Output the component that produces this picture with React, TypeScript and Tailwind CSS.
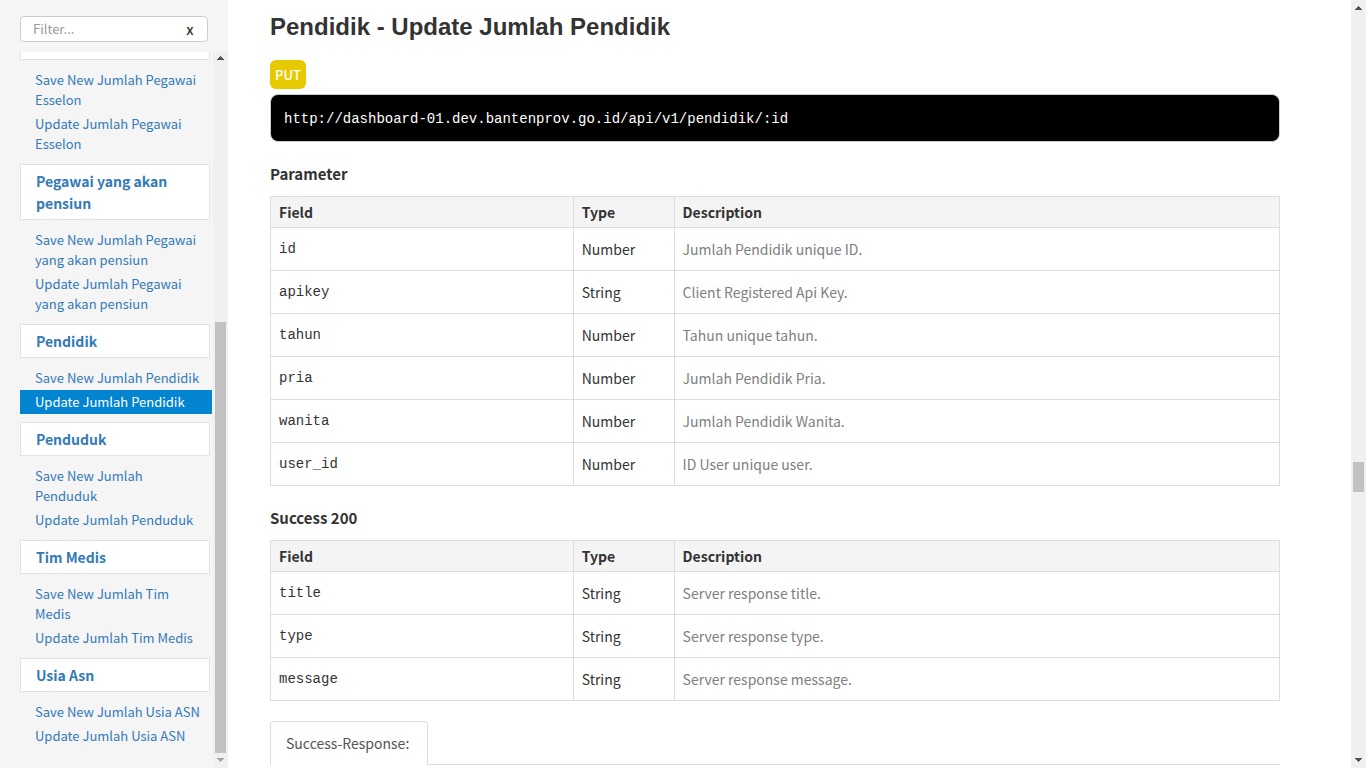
import React from "react";

type NavGroup = { title?: string; items: string[] };
type Field = { name: string; type: string; description: string };

const navGroups: NavGroup[] = [
  { items: ["Save New Jumlah Pegawai Esselon", "Update Jumlah Pegawai Esselon"] },
  {
    title: "Pegawai yang akan pensiun",
    items: ["Save New Jumlah Pegawai yang akan pensiun", "Update Jumlah Pegawai yang akan pensiun"],
  },
  { title: "Pendidik", items: ["Save New Jumlah Pendidik", "Update Jumlah Pendidik"] },
  { title: "Penduduk", items: ["Save New Jumlah Penduduk", "Update Jumlah Penduduk"] },
  { title: "Tim Medis", items: ["Save New Jumlah Tim Medis", "Update Jumlah Tim Medis"] },
  { title: "Usia Asn", items: ["Save New Jumlah Usia ASN", "Update Jumlah Usia ASN"] },
];

const activeItem = "Update Jumlah Pendidik";

const parameters: Field[] = [
  { name: "id", type: "Number", description: "Jumlah Pendidik unique ID." },
  { name: "apikey", type: "String", description: "Client Registered Api Key." },
  { name: "tahun", type: "Number", description: "Tahun unique tahun." },
  { name: "pria", type: "Number", description: "Jumlah Pendidik Pria." },
  { name: "wanita", type: "Number", description: "Jumlah Pendidik Wanita." },
  { name: "user_id", type: "Number", description: "ID User unique user." },
];

const responses: Field[] = [
  { name: "title", type: "String", description: "Server response title." },
  { name: "type", type: "String", description: "Server response type." },
  { name: "message", type: "String", description: "Server response message." },
];

function Arrow({ down = false, muted = false, trim = 0 }: { down?: boolean; muted?: boolean; trim?: number }) {
  return (
    <svg
      width="15"
      height={15 - trim}
      viewBox={`0 ${trim} 15 ${15 - trim}`}
      shapeRendering="crispEdges"
      className={muted ? "shrink-0 fill-[#a3a3a3]" : "shrink-0 fill-[#505050]"}
    >
      {down ? (
        <path d="M4 5h7v1h-1v1h-1v1h-1v1h-1v-1h-1v-1h-1v-1h-1z" />
      ) : (
        <path d="M7 6h1v1h1v1h1v1h1v1h-7v-1h1v-1h1v-1h1z" />
      )}
    </svg>
  );
}

function FieldTable({ title, rows }: { title: string; rows: Field[] }) {
  return (
    <section>
      <h2 className="mb-[11px] text-[15px] leading-[23px] font-bold">{title}</h2>
      <table className="w-full table-fixed border-collapse text-left text-[14px]">
        <thead className="bg-[#f4f4f4]">
          <tr>
            <th className="w-[30%] border border-[#dddddd] px-2 py-1 leading-[22px] font-bold">Field</th>
            <th className="w-[10%] border border-[#dddddd] px-2 py-1 leading-[22px] font-bold">Type</th>
            <th className="w-[60%] border border-[#dddddd] px-2 py-1 leading-[22px] font-bold">Description</th>
          </tr>
        </thead>
        <tbody>
          {rows.map((row) => (
            <tr key={row.name}>
              <td className="border border-[#dddddd] px-2 py-[9px] align-top font-['Liberation_Mono',monospace] leading-6">
                {row.name}
              </td>
              <td className="border border-[#dddddd] px-2 py-2 leading-[26px]">{row.type}</td>
              <td className="border border-[#dddddd] px-2 py-2 leading-[26px] text-[#808080]">{row.description}</td>
            </tr>
          ))}
        </tbody>
      </table>
    </section>
  );
}

export default function App() {
  return (
    <div className="flex h-screen overflow-hidden bg-white font-['Noto_Sans_CJK_SC',sans-serif] text-[#333333]">
      <aside className="flex w-[228px] shrink-0 flex-col bg-[#f5f5f5]">
        <div className="mt-4 mr-5 mb-2.5 ml-5 flex h-[26px] shrink-0 items-center rounded border border-[#cccccc] bg-white text-[13px]">
          <input
            type="text"
            aria-label="Filter"
            placeholder="Filter..."
            className="min-w-0 flex-1 bg-transparent pl-3 outline-none placeholder:text-[#999999]"
          />
          <button type="button" aria-label="Clear filter" className="mr-[7px] w-5 text-[14px] leading-5 font-medium">
            x
          </button>
        </div>
        <div className="flex min-h-0 flex-1 pl-5">
          <nav className="flex min-w-0 flex-1 flex-col text-[13px] leading-5">
            <div className="mr-[3px] h-2 shrink-0 border border-t-0 border-[#e3e3e3] bg-white" />
            {navGroups.map((group, index) => (
              <div key={index} className="shrink-0">
                {group.title && (
                  <a
                    href="#group"
                    className="mt-2 mr-[3px] block border border-[#e3e3e3] bg-white px-[15px] py-[5px] text-[14px] leading-[22px] font-bold text-[#337ab7]"
                  >
                    {group.title}
                  </a>
                )}
                <ul className="mt-2 mr-px">
                  {group.items.map((item) => (
                    <li key={item}>
                      <a
                        href="#item"
                        className={
                          item === activeItem
                            ? "block bg-[#0284d0] py-0.5 pr-2.5 pl-[15px] text-white"
                            : "block py-0.5 pr-2.5 pl-[15px] text-[#337ab7]"
                        }
                      >
                        {item}
                      </a>
                    </li>
                  ))}
                </ul>
              </div>
            ))}
          </nav>
          <div aria-hidden="true" className="flex w-[15px] shrink-0 flex-col bg-[#f0f0f0]">
            <Arrow trim={2} />
            <div className="flex-1" />
            <div className="mx-0.5 h-[431px] shrink-0 bg-[#c1c1c1]" />
            <Arrow down muted />
          </div>
        </div>
      </aside>

      <main className="min-w-0 flex-1 pr-[71px] pl-[42px]">
        <h1 className="pt-3 font-['Liberation_Sans',sans-serif] text-2xl leading-[30px] font-bold">
          Pendidik - Update Jumlah Pendidik
        </h1>
        <div className="mt-[18px] flex">
          <span className="rounded-md bg-[#e5ca00] px-[5px] text-[13px] leading-[29px] font-medium text-white">PUT</span>
        </div>
        <pre className="mt-[5px] mb-5 rounded-lg border border-[#cccccc] bg-black px-[13px] pt-[14px] pb-3 font-['Liberation_Mono',monospace] text-[14px] leading-5 text-white">
          <code className="font-['Liberation_Mono',monospace]">http://dashboard-01.dev.bantenprov.go.id/api/v1/pendidik/:id</code>
        </pre>
        <div className="flex flex-col gap-5">
          <FieldTable title="Parameter" rows={parameters} />
          <FieldTable title="Success 200" rows={responses} />
          <div className="flex border-b border-[#dddddd]">
            <a
              href="#response"
              className="-mb-px rounded-t border border-b-0 border-[#dddddd] bg-white py-2.5 pr-[18px] pl-[15px] text-[14px] leading-[23px] text-[#555555]"
            >
              Success-Response:
            </a>
          </div>
        </div>
      </main>

      <div aria-hidden="true" className="flex w-[15px] shrink-0 flex-col bg-[#f0f0f0]">
        <Arrow />
        <div className="grow-[447]" />
        <div className="mx-0.5 h-[30px] shrink-0 bg-[#c1c1c1]" />
        <div className="grow-[261]" />
        <Arrow down />
      </div>
    </div>
  );
}
